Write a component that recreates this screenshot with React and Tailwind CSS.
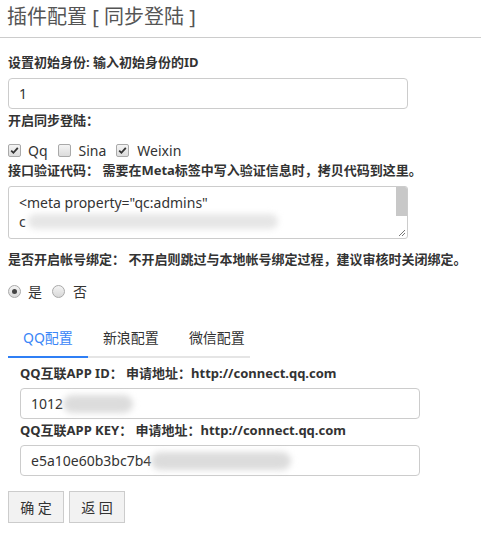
import { useState } from 'react'

const font = { fontFamily: '"Noto Sans", "Noto Sans CJK SC", sans-serif' }

function Check({ checked }) {
  return (
    <span className="inline-flex h-[13px] w-[13px] items-center justify-center rounded-[2px] border border-[#a9a9a9] bg-gradient-to-b from-[#f4f4f4] to-[#dcdcdc]">
      {checked && (
        <svg width="9" height="9" viewBox="0 0 9 9">
          <path d="M1.2 4.6 L3.4 6.8 L7.8 1.8" fill="none" stroke="#333" strokeWidth="1.8" />
        </svg>
      )}
    </span>
  )
}

function Radio({ checked }) {
  return (
    <span className="inline-flex h-[13px] w-[13px] items-center justify-center rounded-full border border-[#a9a9a9] bg-gradient-to-b from-[#f4f4f4] to-[#d8d8d8]">
      {checked && <span className="h-[5px] w-[5px] rounded-full bg-[#444]" />}
    </span>
  )
}

function Blur({ className }) {
  return <span className={`inline-block rounded-full blur-[3px] ${className}`} />
}

export default function App() {
  const [tab, setTab] = useState(0)
  const tabs = ['QQ配置', '新浪配置', '微信配置']

  return (
    <div className="h-[538px] w-[481px] bg-white text-[#333]" style={font}>
      <div className="h-[38px] border-b border-[#ccc] pl-[7px] pt-[3px] text-[20px] leading-[28px] text-[#555]">
        插件配置 [ 同步登陆 ]
      </div>

      <div className="pl-[8px]">
        <div className="mt-[14px] text-[13px] font-bold leading-[20px]">设置初始身份: 输入初始身份的ID</div>
        <div className="mt-[6px] flex h-[31px] w-[400px] items-center rounded-[4px] border border-[#ccc] pl-[10px] text-[14px]">1</div>

        <div className="mt-[1px] text-[13px] font-bold leading-[20px]">开启同步登陆：</div>
        <div className="mt-[10px] flex h-[20px] items-center text-[14px]">
          <Check checked />
          <span className="ml-[7px] mr-[10px]">Qq</span>
          <Check />
          <span className="ml-[8px] mr-[10px]">Sina</span>
          <Check checked />
          <span className="ml-[8px]">Weixin</span>
        </div>

        <div className="text-[13px] font-bold leading-[20px]">
          接口验证代码： 需要在Meta标签中写入验证信息时，拷贝代码到这里。
        </div>
        <div className="relative mt-[6px] h-[53px] w-[400px] overflow-hidden rounded-[3px] border border-[#ccc] pl-[10px] pt-[6px] text-[14px] leading-[19px]">
          <div>&lt;meta property="qc:admins"</div>
          <div className="flex items-center">
            <span>c</span>
            <Blur className="ml-[2px] h-[15px] w-[250px] bg-[#e6e6e6]" />
          </div>
          <div className="absolute right-0 top-0 h-[29px] w-[11px] bg-[#c8c8c8]" />
          <svg className="absolute bottom-[1px] right-[1px]" width="9" height="9" viewBox="0 0 9 9">
            <path d="M8 2 L2 8 M8 5 L5 8" stroke="#777" strokeWidth="1" />
          </svg>
        </div>

        <div className="mt-[10px] text-[13px] font-bold leading-[20px]">
          是否开启帐号绑定： 不开启则跳过与本地帐号绑定过程，建议审核时关闭绑定。
        </div>
        <div className="mt-[12px] flex h-[20px] items-center text-[14px]">
          <Radio checked />
          <span className="ml-[7px] mr-[10px]">是</span>
          <Radio />
          <span className="ml-[8px]">否</span>
        </div>

        <div className="mt-[20px] flex w-[242px] border-b-2 border-[#e5e5e5]">
          {tabs.map((t, i) => (
            <button
              key={t}
              onClick={() => setTab(i)}
              className={`-mb-[2px] shrink-0 whitespace-nowrap border-b-2 px-[15px] pb-[8px] pt-[7px] text-[14px] leading-[20px] ${
                tab === i ? 'border-[#2f7ff5] text-[#3a86f7]' : 'border-transparent text-[#333]'
              }`}
            >
              {t}
            </button>
          ))}
        </div>

        <div className="pl-[12px]">
          <div className="mt-[5px] text-[13px] font-bold leading-[20px]">QQ互联APP ID： 申请地址：http://connect.qq.com</div>
          <div className="mt-[5px] flex h-[31px] w-[400px] items-center rounded-[4px] border border-[#ccc] pl-[10px] text-[14px]">
            <span>1012</span>
            <Blur className="h-[18px] w-[70px] bg-[#dcdcdc]" />
          </div>
          <div className="mt-[1px] text-[13px] font-bold leading-[20px]">QQ互联APP KEY： 申请地址：http://connect.qq.com</div>
          <div className="mt-[5px] flex h-[31px] w-[400px] items-center rounded-[4px] border border-[#ccc] pl-[10px] text-[14px]">
            <span>e5a10e60b3bc7b4</span>
            <Blur className="h-[18px] w-[140px] bg-[#dcdcdc]" />
          </div>
        </div>

        <div className="mt-[15px] flex gap-[5px]">
          <button className="h-[32px] w-[56px] border border-[#ccc] bg-[#f2f2f2] text-[14px]">确&nbsp;定</button>
          <button className="h-[32px] w-[56px] border border-[#ccc] bg-[#f2f2f2] text-[14px]">返&nbsp;回</button>
        </div>
      </div>
    </div>
  )
}
